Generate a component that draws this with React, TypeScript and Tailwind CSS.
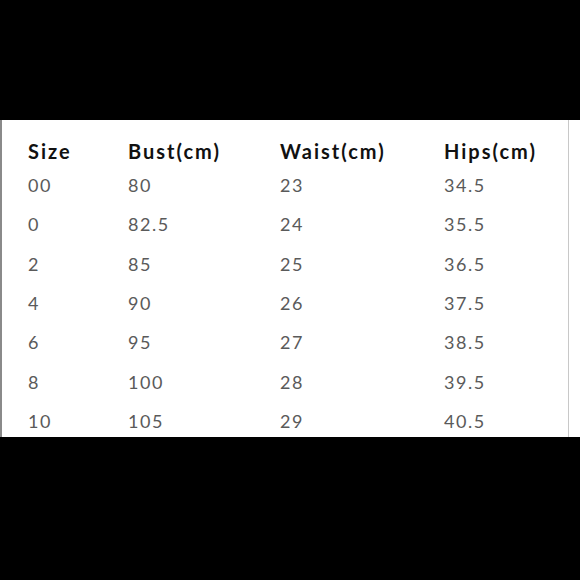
const rows = [
  ['00', '80', '23', '34.5'],
  ['0', '82.5', '24', '35.5'],
  ['2', '85', '25', '36.5'],
  ['4', '90', '26', '37.5'],
  ['6', '95', '27', '38.5'],
  ['8', '100', '28', '39.5'],
  ['10', '105', '29', '40.5'],
];

const headers = ['Size', 'Bust(cm)', 'Waist(cm)', 'Hips(cm)'];

export default function App() {
  return (
    <div className="w-[580px] h-[580px] bg-black flex flex-col overflow-hidden font-['Lato',sans-serif]">
      <div className="h-[120px] shrink-0" />
      <div className="h-[317px] shrink-0 flex bg-white overflow-hidden">
        <div className="w-[568px] border-l-2 border-[#8a8a8a] pl-[26px] pt-[16px]">
          <div className="grid grid-cols-[100px_152px_164px_1fr] h-[30px] items-center text-[20px] font-bold text-[#111] tracking-[2px]">
            {headers.map((h) => (
              <div key={h}>{h}</div>
            ))}
          </div>
          {rows.map((r) => (
            <div
              key={r[0]}
              className="grid grid-cols-[100px_152px_164px_1fr] h-[39.33px] items-center text-[18px] text-[#5a5a5a] tracking-[1.5px]"
            >
              {r.map((c, i) => (
                <div key={i}>{c}</div>
              ))}
            </div>
          ))}
        </div>
        <div className="w-px bg-[#c8c8c8]" />
        <div className="flex-1 bg-white" />
      </div>
    </div>
  );
}
